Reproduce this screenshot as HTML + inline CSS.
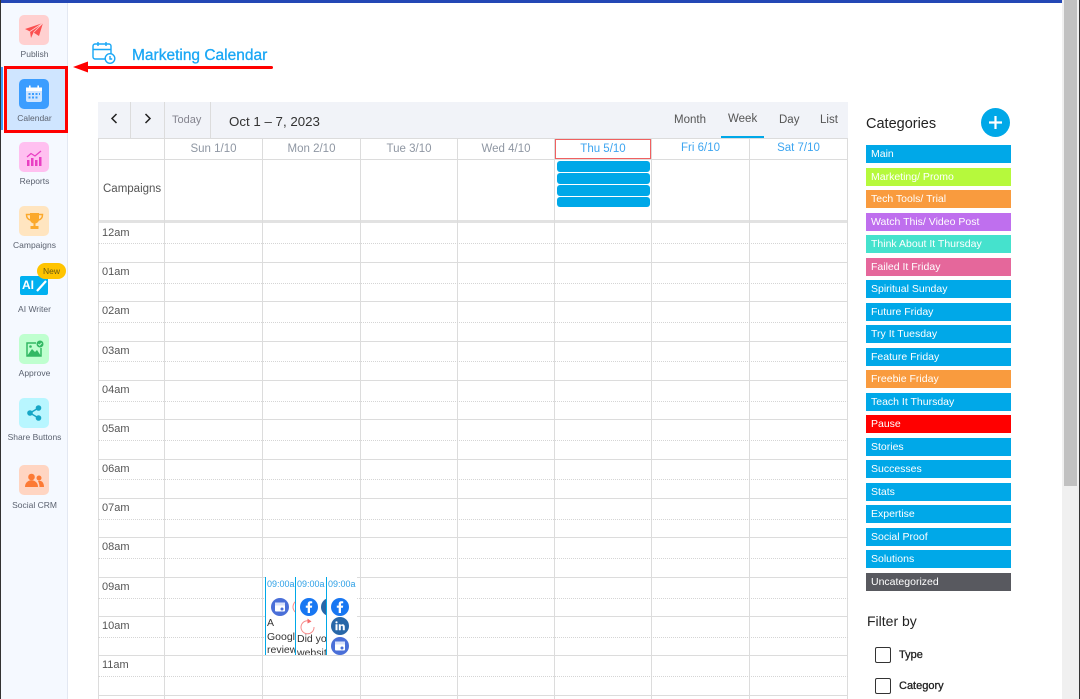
<!DOCTYPE html>
<html><head><meta charset="utf-8"><style>
html,body{margin:0;padding:0;width:1080px;height:699px;overflow:hidden;background:#fff;font-family:"Liberation Sans",sans-serif}
div,span,svg{position:absolute}
.t{white-space:nowrap;line-height:14px}
.tile{left:19px;width:30px;height:30px;border-radius:5px}
.lb{left:2px;width:65px;text-align:center;font-size:8.5px;color:#5b6270;line-height:12px;white-space:nowrap}
.v{width:1px;background:#dcdcdc;top:138px;height:561px}
.h{left:98px;width:750px;height:1px;background:#dcdcdc}
.d{left:98px;width:750px;height:0;border-top:1px dotted #d5d5d5}
.hr{left:102px;font-size:11px;color:#555;line-height:14px}
.dh{top:142px;text-align:center;font-size:11.5px;color:#8f97a3;line-height:14px;white-space:nowrap}
.cat{left:866px;width:145px;height:18px;color:#fff;font-size:10.5px;line-height:19px;text-indent:5px;white-space:nowrap}
.bar{left:557px;width:93px;height:11px;background:#00a8e8;border-radius:3px}
.ev{top:577px;height:78px;background:#fff;border-left:1px solid #00a8e8;overflow:hidden}
.tm{left:1px;top:2px;font-size:9px;line-height:11px;color:#2b9fe6;white-space:nowrap}
.txt{font-size:10.5px;line-height:13.5px;color:#333;white-space:nowrap}
</style></head><body>
<div style="left:0;top:0;width:1062px;height:3px;background:#2347b5"></div>
<div style="left:0;top:0;width:1px;height:699px;background:#333"></div>
<div style="left:1px;top:3px;width:66px;height:696px;background:#f5f9ff;border-right:1px solid #e3e8f2"></div>

<!-- scrollbar -->
<div style="left:1062px;top:0;width:17px;height:699px;background:#f0f0f0"></div>
<div style="left:1064px;top:0;width:13px;height:486px;background:#c1c1c1"></div>
<div style="left:1079px;top:0;width:1px;height:699px;background:#333"></div>

<!-- sidebar -->
<div style="left:1px;top:67px;width:2px;height:63px;background:#3b9dff"></div>
<div style="left:4px;top:66px;width:58px;height:61px;background:#cfe5ff;border:3px solid #f00"></div>

<div class="tile" style="top:15px;background:#ffd0d0"></div>
<svg style="left:25px;top:22px" width="19" height="17" viewBox="0 0 19 17"><path d="M0 7L18 1L14 14L8.500 10.500L6 16L5 9.500Z" fill="#fb5050"/><path d="M5 9.500L18 1L8.500 10.500" stroke="#ffd0d0" stroke-width=".8" fill="none"/></svg>
<div class="lb" style="top:48px">Publish</div>

<div class="tile" style="top:79px;background:#3b9dff"></div>
<svg style="left:25px;top:85px" width="18" height="18" viewBox="0 0 18 18"><rect x="1" y="2.500" width="16" height="14.500" rx="2" fill="#cfe5ff"/><rect x="1" y="2.500" width="16" height="3.500" fill="#fff"/><rect x="4" y="0.500" width="1.600" height="4" fill="#fff"/><rect x="12.400" y="0.500" width="1.600" height="4" fill="#fff"/><path d="M3.500 8h2v2h-2zM7 8h2v2H7zM10.500 8h2v2h-2zM14 8h1v2h-1zM3.500 11.500h2v2h-2zM7 11.500h2v2H7zM10.500 11.500h2v2h-2z" fill="#3b9dff"/></svg>
<div class="lb" style="top:112px">Calendar</div>

<div class="tile" style="top:142px;background:#ffc0f0"></div>
<svg style="left:26px;top:150px" width="16" height="16" viewBox="0 0 16 16"><path d="M1 10h2.500v6H1zM5 8h2.500v8H5zM9 10h2.500v6H9zM13 7h2.500v9H13z" fill="#e93fc3"/><path d="M1 7L5 3.500L9 6L15 1" stroke="#e93fc3" stroke-width="1.300" fill="none"/></svg>
<div class="lb" style="top:175px">Reports</div>

<div class="tile" style="top:206px;background:#ffe5c0"></div>
<svg style="left:25px;top:212px" width="19" height="18" viewBox="0 0 19 18"><path d="M5 1h9v6c0 3-2 4.500-4.500 4.500S5 10 5 7z" fill="#fba92c"/><path d="M5 2.500H1.500c0 3 1.500 5 4 5.500M14 2.500h3.500c0 3-1.500 5-4 5.500" stroke="#fba92c" stroke-width="1.500" fill="none"/><path d="M8.500 11h2v3h-2zM5.500 14h8v3h-8z" fill="#fba92c"/></svg>
<div class="lb" style="top:239px">Campaigns</div>

<div style="left:20px;top:276px;width:28px;height:19px;background:#00b0f0;border-radius:2px"></div>
<div class="t" style="left:22px;top:278px;color:#fff;font-size:12px;font-weight:bold">AI</div>
<svg style="left:36px;top:279px" width="12" height="13" viewBox="0 0 12 13"><path d="M1 12L10 2" stroke="#fff" stroke-width="2.200"/></svg>
<div style="left:37px;top:263px;width:29px;height:16px;background:#ffc400;border-radius:8px"></div>
<div class="t" style="left:37px;top:264px;width:29px;text-align:center;font-size:8.5px;color:#6b5a10">New</div>
<div class="lb" style="top:303px">AI Writer</div>

<div class="tile" style="top:334px;background:#bfffcf"></div>
<svg style="left:25px;top:340px" width="19" height="19" viewBox="0 0 19 19"><path d="M11 3H2v13h14V8" stroke="#33b864" stroke-width="1.500" fill="none"/><path d="M2 16L7 9l3 3 2-2 4 6z" fill="#33b864"/><circle cx="5.500" cy="6.500" r="1.300" fill="#33b864"/><circle cx="15" cy="4" r="3.500" fill="#33b864"/><path d="M13.300 4l1.300 1.300 2-2.300" stroke="#bfffcf" stroke-width="1" fill="none"/></svg>
<div class="lb" style="top:367px">Approve</div>

<div class="tile" style="top:398px;background:#b8f6ff"></div>
<svg style="left:27px;top:405px" width="15" height="16" viewBox="0 0 15 16"><path d="M3 8L11.500 3M3 8L11.500 13" stroke="#16a6c6" stroke-width="1.500"/><circle cx="3" cy="8" r="2.800" fill="#16a6c6"/><circle cx="11.500" cy="3" r="2.800" fill="#16a6c6"/><circle cx="11.500" cy="13" r="2.800" fill="#16a6c6"/></svg>
<div class="lb" style="top:431px">Share Buttons</div>

<div class="tile" style="top:465px;background:#ffd5c2"></div>
<svg style="left:25px;top:473px" width="19" height="15" viewBox="0 0 19 15"><circle cx="6.500" cy="4" r="3.300" fill="#fc7a35"/><circle cx="14" cy="5" r="2.500" fill="#fc7a35"/><path d="M0 14c0-9 13-9 13 0z" fill="#fc7a35"/><path d="M13 8c3-1 6 1 6 6h-4.500c0-2-.5-4-1.500-6z" fill="#fc7a35"/></svg>
<div class="lb" style="top:499px">Social CRM</div>

<!-- title + arrow -->
<svg style="left:92px;top:41px" width="25" height="24" viewBox="0 0 25 24" fill="none" stroke="#1aa7f5" stroke-width="1.400"><path d="M14 18H3a2 2 0 0 1-2-2V5a2 2 0 0 1 2-2h14a2 2 0 0 1 2 2v8"/><path d="M1 8.500h18M6 1v4M14 1v4"/><circle cx="18" cy="17.500" r="4.800"/><path d="M18 15v3h2.200"/></svg>
<div class="t" style="left:132px;top:48px;font-size:15.500px;line-height:16px;color:#1aa7f5;-webkit-text-stroke:.3px #1aa7f5">Marketing Calendar</div>
<div style="left:85px;top:66px;width:188px;height:3px;background:#f00;border-radius:2px"></div>
<svg style="left:73px;top:61px" width="16" height="12" viewBox="0 0 16 12"><path d="M0 6L15 0.500V11.500Z" fill="#f00"/></svg>

<!-- toolbar -->
<div style="left:98px;top:102px;width:750px;height:36px;background:#f1f3f8"></div>
<div style="left:130px;top:102px;width:1px;height:36px;background:#dcdcdc"></div>
<div style="left:164px;top:102px;width:1px;height:36px;background:#dcdcdc"></div>
<div style="left:210px;top:102px;width:1px;height:36px;background:#dcdcdc"></div>
<svg style="left:110px;top:113px" width="8" height="11" viewBox="0 0 8 11"><path d="M6.500 1L2 5.500L6.500 10" stroke="#222" stroke-width="1.500" fill="none"/></svg>
<svg style="left:144px;top:113px" width="8" height="11" viewBox="0 0 8 11"><path d="M1.500 1L6 5.500L1.500 10" stroke="#222" stroke-width="1.500" fill="none"/></svg>
<div class="t" style="left:172px;top:113px;font-size:11px;color:#85858f">Today</div>
<div class="t" style="left:229px;top:115px;font-size:13.300px;color:#333">Oct 1 – 7, 2023</div>
<div class="t" style="left:674px;top:113px;font-size:11.500px;color:#555">Month</div>
<div class="t" style="left:728px;top:112px;font-size:11.500px;color:#555">Week</div>
<div class="t" style="left:779px;top:113px;font-size:11.500px;color:#555">Day</div>
<div class="t" style="left:820px;top:113px;font-size:11.500px;color:#555">List</div>
<div style="left:721px;top:136px;width:43px;height:2px;background:#00a8e8"></div>

<!-- grid -->
<div class="h" style="top:138px"></div>
<div class="h" style="top:159px"></div>
<div class="h" style="top:220px;height:3px;background:#e2e2e2"></div>
<div class="v" style="left:98px"></div><div class="v" style="left:164px"></div><div class="v" style="left:262px"></div><div class="v" style="left:360px"></div><div class="v" style="left:457px"></div><div class="v" style="left:554px"></div><div class="v" style="left:651px"></div><div class="v" style="left:749px"></div><div class="v" style="left:847px"></div>

<div class="h" style="top:262px"></div><div class="h" style="top:301px"></div><div class="h" style="top:341px"></div><div class="h" style="top:380px"></div><div class="h" style="top:419px"></div><div class="h" style="top:459px"></div><div class="h" style="top:498px"></div><div class="h" style="top:537px"></div><div class="h" style="top:577px"></div><div class="h" style="top:616px"></div><div class="h" style="top:655px"></div><div class="h" style="top:695px"></div>
<div class="d" style="top:243px"></div><div class="d" style="top:283px"></div><div class="d" style="top:322px"></div><div class="d" style="top:361px"></div><div class="d" style="top:401px"></div><div class="d" style="top:440px"></div><div class="d" style="top:479px"></div><div class="d" style="top:519px"></div><div class="d" style="top:558px"></div><div class="d" style="top:598px"></div><div class="d" style="top:637px"></div><div class="d" style="top:676px"></div>

<div class="dh" style="left:165px;width:97px">Sun 1/10</div>
<div class="dh" style="left:263px;width:97px">Mon 2/10</div>
<div class="dh" style="left:361px;width:96px">Tue 3/10</div>
<div class="dh" style="left:458px;width:96px">Wed 4/10</div>
<div style="left:555px;top:139px;width:94px;height:18px;border:1px solid #f06060;background:#fff"></div>
<div class="dh" style="left:555px;width:96px;color:#3da5f0">Thu 5/10</div>
<div class="dh" style="left:652px;width:97px;top:141px;color:#3da5f0">Fri 6/10</div>
<div class="dh" style="left:750px;width:97px;top:141px;color:#3da5f0">Sat 7/10</div>

<div class="t" style="left:103px;top:182px;font-size:11.500px;color:#555">Campaigns</div>
<div class="bar" style="top:161px"></div><div class="bar" style="top:173px"></div><div class="bar" style="top:185px"></div><div class="bar" style="top:197px;height:10px"></div>

<div class="hr" style="top:226px">12am</div><div class="hr" style="top:265px">01am</div><div class="hr" style="top:304px">02am</div><div class="hr" style="top:344px">03am</div><div class="hr" style="top:383px">04am</div><div class="hr" style="top:422px">05am</div><div class="hr" style="top:462px">06am</div><div class="hr" style="top:501px">07am</div><div class="hr" style="top:540px">08am</div><div class="hr" style="top:580px">09am</div><div class="hr" style="top:619px">10am</div><div class="hr" style="top:658px">11am</div>

<!-- events -->
<div class="ev" style="left:265px;width:29px">
 <div class="tm">09:00a</div>
 <svg style="left:5px;top:21px" width="18" height="18" viewBox="0 0 18 18"><circle cx="9" cy="9" r="9" fill="#4a6fd8"/><rect x="4" y="4.500" width="10" height="9" rx="1" fill="#fff"/><rect x="4" y="4.500" width="10" height="3" fill="#dbe3fa"/><circle cx="11" cy="11" r="1.500" fill="#4a6fd8"/></svg>
 <svg style="left:25px;top:21px" width="18" height="18" viewBox="0 0 18 18"><path d="M14 4A7 7 0 1 0 16 9" stroke="#f78c8c" fill="none"/></svg>
 <div class="txt" style="left:1px;top:40px">A<br>Google<br>review</div>
</div>
<div class="ev" style="left:295px;width:30px">
 <div class="tm">09:00a</div>
 <svg style="left:4px;top:21px" width="18" height="18" viewBox="0 0 18 18"><circle cx="9" cy="9" r="9" fill="#1877f2"/><path d="M10 15V9.800h1.900l.3-2.200H10V6.300c0-.7.300-1 1.100-1h1.100V3.400c-.5-.1-1.100-.1-1.700-.1-1.700 0-2.800 1-2.800 2.800v1.500H5.800v2.200h1.900V15z" fill="#fff"/></svg>
 <svg style="left:25px;top:21px" width="18" height="18" viewBox="0 0 18 18"><circle cx="9" cy="9" r="9" fill="#2867a8"/></svg>
 <svg style="left:4px;top:41px" width="15" height="17" viewBox="0 0 15 17"><path d="M10.500 3.500A6.500 6.500 0 1 0 14 9" stroke="#f78c8c" fill="none"/><path d="M7.500 0.500L11.500 3.500L7.500 5.500Z" fill="#f56a6a"/></svg>
 <div class="txt" style="left:1px;top:56px">Did your<br>website</div>
</div>
<div class="ev" style="left:326px;width:30px">
 <div class="tm">09:00a</div>
 <svg style="left:4px;top:21px" width="18" height="18" viewBox="0 0 18 18"><circle cx="9" cy="9" r="9" fill="#1877f2"/><path d="M10 15V9.800h1.900l.3-2.200H10V6.300c0-.7.300-1 1.100-1h1.100V3.400c-.5-.1-1.100-.1-1.700-.1-1.700 0-2.800 1-2.800 2.800v1.500H5.800v2.200h1.900V15z" fill="#fff"/></svg>
 <svg style="left:4px;top:40px" width="18" height="18" viewBox="0 0 18 18"><circle cx="9" cy="9" r="9" fill="#2867a8"/><path d="M4.500 7.300h2v6h-2zM7.800 7.300h1.900v.9c.4-.6 1-1 1.900-1 1.500 0 2.200 1 2.200 2.600v3.500h-2v-3.200c0-.8-.3-1.300-1-1.300s-1 .5-1 1.300v3.200h-2z" fill="#fff"/><circle cx="5.500" cy="5.300" r="1.100" fill="#fff"/></svg>
 <svg style="left:4px;top:60px" width="18" height="18" viewBox="0 0 18 18"><circle cx="9" cy="9" r="9" fill="#4a6fd8"/><rect x="4" y="4.500" width="10" height="9" rx="1" fill="#fff"/><rect x="4" y="4.500" width="10" height="3" fill="#dbe3fa"/><circle cx="11" cy="11" r="1.500" fill="#4a6fd8"/></svg>
</div>

<!-- categories -->
<div class="t" style="left:866px;top:117px;font-size:14.500px;color:#222">Categories</div>
<div style="left:981px;top:108px;width:29px;height:29px;border-radius:50%;background:#00a8e8"></div>
<svg style="left:981px;top:108px" width="29" height="29" viewBox="0 0 29 29"><path d="M14.500 8v13M8 14.500h13" stroke="#fff" stroke-width="2.200"/></svg>

<div class="cat" style="top:145px;background:#00a8e8">Main</div>
<div class="cat" style="top:168px;background:#b6f93c">Marketing/ Promo</div>
<div class="cat" style="top:190px;background:#f99b3e">Tech Tools/ Trial</div>
<div class="cat" style="top:213px;background:#bf6fee">Watch This/ Video Post</div>
<div class="cat" style="top:235px;background:#45e2cd">Think About It Thursday</div>
<div class="cat" style="top:258px;background:#e5679b">Failed It Friday</div>
<div class="cat" style="top:280px;background:#00a8e8">Spiritual Sunday</div>
<div class="cat" style="top:303px;background:#00a8e8">Future Friday</div>
<div class="cat" style="top:325px;background:#00a8e8">Try It Tuesday</div>
<div class="cat" style="top:348px;background:#00a8e8">Feature Friday</div>
<div class="cat" style="top:370px;background:#f99b3e">Freebie Friday</div>
<div class="cat" style="top:393px;background:#00a8e8">Teach It Thursday</div>
<div class="cat" style="top:415px;background:#f00">Pause</div>
<div class="cat" style="top:438px;background:#00a8e8">Stories</div>
<div class="cat" style="top:460px;background:#00a8e8">Successes</div>
<div class="cat" style="top:483px;background:#00a8e8">Stats</div>
<div class="cat" style="top:505px;background:#00a8e8">Expertise</div>
<div class="cat" style="top:528px;background:#00a8e8">Social Proof</div>
<div class="cat" style="top:550px;background:#00a8e8">Solutions</div>
<div class="cat" style="top:573px;background:#58595f">Uncategorized</div>

<div class="t" style="left:867px;top:614px;font-size:14px;color:#222">Filter by</div>
<div style="left:875px;top:647px;width:14px;height:14px;border:1px solid #333;border-radius:2px"></div>
<div class="t" style="left:899px;top:648px;font-size:11px;color:#222;-webkit-text-stroke:.3px #222">Type</div>
<div style="left:875px;top:678px;width:14px;height:14px;border:1px solid #333;border-radius:2px"></div>
<div class="t" style="left:899px;top:679px;font-size:11px;color:#222;-webkit-text-stroke:.3px #222">Category</div>
</body></html>
